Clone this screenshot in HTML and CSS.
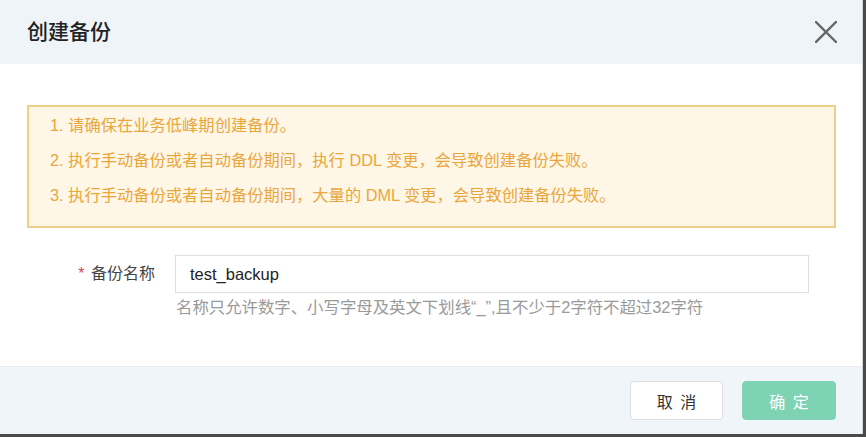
FILE: index.html
```html
<!DOCTYPE html>
<html lang="zh-CN">
<head>
<meta charset="utf-8">
<title>创建备份</title>
<link rel="stylesheet" href="styles.css">
</head>
<body>
<div class="dialog">
  <div class="dialog-header">
    <div class="dialog-title">创建备份</div>
    <button class="close-btn" aria-label="关闭">
      <svg width="22" height="22" viewBox="0 0 22 22"><path d="M1 1 L21 21 M21 1 L1 21" stroke="#666" stroke-width="2.4" fill="none" stroke-linecap="square"/></svg>
    </button>
  </div>
  <div class="dialog-body">
    <div class="warning">
      <p>1. 请确保在业务低峰期创建备份。</p>
      <p>2. 执行手动备份或者自动备份期间，执行 DDL 变更，会导致创建备份失败。</p>
      <p>3. 执行手动备份或者自动备份期间，大量的 DML 变更，会导致创建备份失败。</p>
    </div>
    <div class="form-row">
      <label class="form-label"><span class="req">*</span> 备份名称</label>
      <div class="form-field">
        <div class="input">test_backup</div>
        <div class="hint">名称只允许数字、小写字母及英文下划线“_”,且不少于2字符不超过32字符</div>
      </div>
    </div>
  </div>
  <div class="dialog-footer">
    <button class="btn btn-cancel">取 消</button>
    <button class="btn btn-ok">确 定</button>
  </div>
</div>
</body>
</html>
```
FILE: styles.css
```css
html, body {
  margin: 0;
  padding: 0;
  background: #4a4a4a;
}
body {
  font-family: "Liberation Sans", "Noto Sans CJK SC", sans-serif;
  color: #333;
}
.dialog {
  width: 862px;
  height: 434px;
  background: #fff;
  border-right: 1px solid #d6d6d6;
  display: flex;
  flex-direction: column;
}
.dialog-header {
  height: 64px;
  background: #eff4f9;
  display: flex;
  align-items: center;
  justify-content: space-between;
  padding: 0 25px 0 27px;
  box-sizing: border-box;
}
.dialog-title {
  font-size: 21px;
  font-weight: 500;
  color: #222;
  font-family: "Noto Sans CJK SC", sans-serif;
  margin-top: -4px;
}
.close-btn {
  border: 0;
  background: none;
  padding: 0;
  width: 22px;
  height: 22px;
  display: flex;
}
.dialog-body {
  flex: 1;
  padding: 41px 26px 0 27px;
}
.warning {
  background: #fef7e8;
  border: 2px solid #ecd088;
  padding: 1px 21px 13px;
  color: #eba63b;
  font-size: 16.3px;
}
.warning p {
  margin: 0;
  line-height: 35px;
}
.form-row {
  display: flex;
  margin-top: 27px;
}
.form-label {
  width: 148px;
  box-sizing: border-box;
  padding-right: 20px;
  text-align: right;
  font-size: 16px;
  line-height: 38px;
  color: #444;
}
.req {
  color: #d0455a;
  margin-right: 2px;
}
.form-field {
  display: flex;
  flex-direction: column;
}
.input {
  width: 634px;
  height: 38px;
  box-sizing: border-box;
  border: 1px solid #dcdfe3;
  padding: 0 14px;
  line-height: 36px;
  font-size: 16.5px;
  color: #222;
}
.hint {
  margin-top: 4px;
  line-height: 20px;
  font-size: 16.4px;
  color: #9a9a9a;
  padding-left: 1px;
}
.dialog-footer {
  height: 68px;
  box-sizing: border-box;
  background: #f0f5fa;
  border-top: 1px solid #e8edf2;
  display: flex;
  justify-content: flex-end;
  align-items: flex-start;
  padding: 14px 26px 0 0;
  gap: 19px;
}
.btn {
  height: 39px;
  width: 94px;
  border-radius: 4px;
  font-size: 16px;
  font-family: "Noto Sans CJK SC", sans-serif;
  letter-spacing: 2px;
  text-indent: 2px;
  cursor: pointer;
}
.btn-cancel {
  background: #fff;
  border: 1px solid #dcdfe3;
  color: #333;
  width: 93px;
}
.btn-ok {
  background: #7dd3b3;
  border: 1px solid #7dd3b3;
  color: #fff;
}
```
